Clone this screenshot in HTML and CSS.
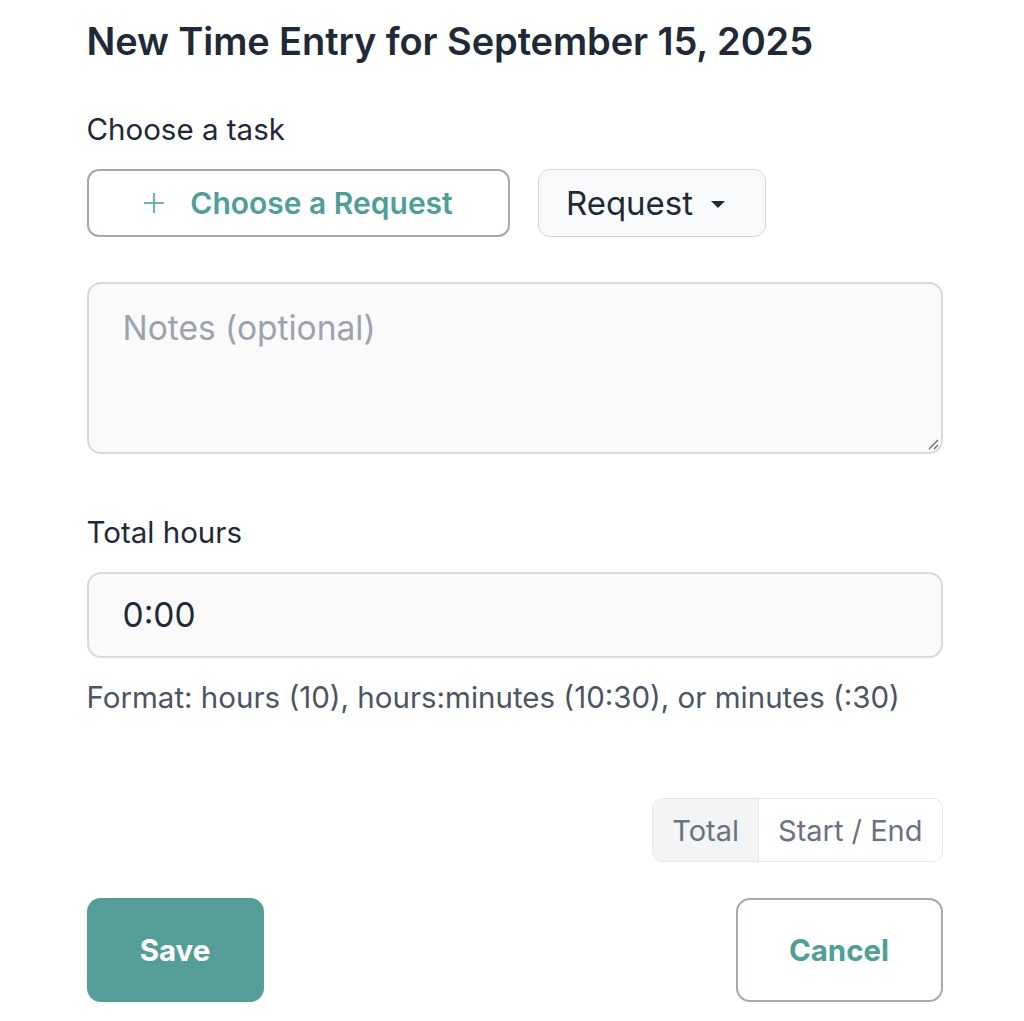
FILE: index.html
```html
<!DOCTYPE html>
<html>
<head>
<meta charset="utf-8">
<link rel="stylesheet" href="styles.css">
</head>
<body>
<div class="form">
  <h1 class="title">New Time Entry for September 15, 2025</h1>
  <div class="label task-label">Choose a task</div>
  <div class="task-row">
    <button class="choose-btn">
      <svg class="plus" width="22" height="22" viewBox="0 0 22 22"><path d="M11 1v20M1 11h20" stroke="currentColor" stroke-width="2.2" fill="none"/></svg>
      <span>Choose a Request</span>
    </button>
    <button class="type-btn"><span>Request</span><span class="caret"></span></button>
  </div>
  <div class="notes">
    <span class="placeholder">Notes (optional)</span>
    <svg class="grip" width="14" height="14" viewBox="0 0 14 14"><path d="M13 4L4 13M13 9L9 13" stroke="#6b6b6b" stroke-width="1.4" fill="none"/></svg>
  </div>
  <div class="label hours-label">Total hours</div>
  <div class="hours-input">0:00</div>
  <div class="hint">Format: hours (10), hours:minutes (10:30), or minutes (:30)</div>
  <div class="toggle-row">
    <div class="toggle">
      <div class="seg active">Total</div>
      <div class="seg">Start / End</div>
    </div>
  </div>
  <div class="actions">
    <button class="save">Save</button>
    <button class="cancel">Cancel</button>
  </div>
</div>
</body>
</html>
```
FILE: styles.css
```css
* { box-sizing: border-box; }
html, body { margin: 0; padding: 0; background: #fff; }
body { font-family: Inter, "Noto Sans", sans-serif; color: #1f2937; }
.form { width: 856px; margin-left: 86.5px; padding-top: 19px; }
.title { margin: 0; font-size: 38px; font-weight: 600; line-height: 44px; color: #1f2937; letter-spacing: -0.1px; }
.label { font-size: 29.5px; line-height: 32px; color: #1f2937; }
.task-label { margin-top: 50px; }
.task-row { display: flex; gap: 28px; margin-top: 24px; }
button { font-family: inherit; cursor: pointer; }
.choose-btn { width: 423px; height: 68px; border: 2px solid #a3a8b3; border-radius: 12px; background: #fff; color: #4f9e97; font-size: 30px; font-weight: 600; display: flex; align-items: center; justify-content: center; gap: 25px; padding: 0; }
.choose-btn .plus { color: #6fb5ae; }
.type-btn { width: 228px; height: 68px; border: 1.5px solid #d1d5db; border-radius: 12px; background: #f9fafb; color: #1f2937; font-size: 33px; display: flex; align-items: center; justify-content: center; gap: 18px; padding: 0 12px 0 0; }
.caret { width: 0; height: 0; border-left: 7px solid transparent; border-right: 7px solid transparent; border-top: 7px solid #1f2937; margin-top: 3px; }
.notes { position: relative; margin-top: 45px; height: 172px; border: 2px solid #d9d9d9; border-radius: 14px; background: #fafafa; padding: 24px 34px; }
.placeholder { font-size: 33.5px; line-height: 40px; color: #9ca3af; }
.grip { position: absolute; right: 2px; bottom: 2px; }
.hours-label { margin-top: 62px; }
.hours-input { margin-top: 24px; height: 86px; border: 2px solid #d9d9d9; border-radius: 14px; background: #fafafa; padding: 0 34px; font-size: 33.5px; line-height: 82px; color: #1f2937; }
.hint { margin-top: 22px; font-size: 29.5px; line-height: 34px; color: #4b5563; }
.toggle-row { display: flex; justify-content: flex-end; margin-top: 84px; }
.toggle { display: flex; height: 64px; border: 1.5px solid #e5e7eb; border-radius: 10px; overflow: hidden; }
.seg { display: flex; align-items: center; padding: 0 19px; font-size: 29px; color: #6b7280; background: #fff; }
.seg.active { background: #f3f4f6; border-right: 1.5px solid #e5e7eb; }
.actions { display: flex; justify-content: space-between; margin-top: 36px; }
.save { width: 177px; height: 104px; border: none; border-radius: 14px; background: #559e98; color: #fff; font-size: 29.5px; font-weight: 700; }
.cancel { width: 207px; height: 104px; border: 2px solid #a3a8b3; border-radius: 14px; background: #fff; color: #4f9e97; font-size: 29.5px; font-weight: 700; }
```
